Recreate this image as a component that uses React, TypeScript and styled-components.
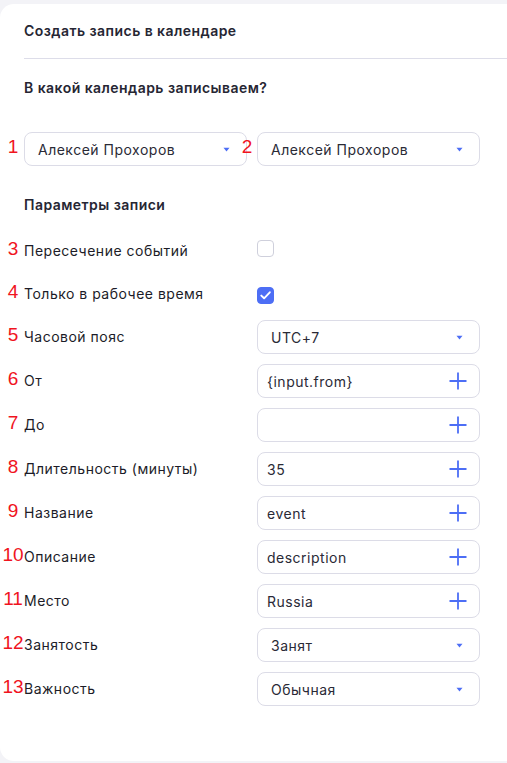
import React from "react";
import styled, { createGlobalStyle } from "styled-components";

const Global = createGlobalStyle`
  html, body { margin: 0; padding: 0; }
  body {
    background: #f3f3f7;
    font-family: Inter, "Noto Sans", sans-serif;
    color: #1f1f2b;
  }
  * { box-sizing: border-box; }
`;

const Card = styled.div`
  margin-top: 4px;
  height: 757px;
  background: #ffffff;
  border-radius: 14px 0 0 14px;
`;

const Header = styled.div`
  margin-left: 24px;
  padding: 19px 0 19px 0;
  border-bottom: 1px solid #dddde9;
`;

const Title = styled.div`
  font-size: 14px;
  line-height: 16px;
  font-weight: 600;
  letter-spacing: 0.45px;
  color: #262633;
`;

const Body = styled.div`
  padding: 21px 27px 0 24px;
`;

const SectionTitle = styled.div<{ $gap: number }>`
  font-size: 14px;
  line-height: 16px;
  font-weight: 600;
  letter-spacing: 0.45px;
  color: #262633;
  margin-bottom: ${(p) => p.$gap}px;
`;

const Pair = styled.div`
  display: grid;
  grid-template-columns: 1fr 1fr;
  gap: 10px;
  margin-bottom: 31px;
`;

const Slot = styled.div`
  position: relative;
`;

const Mark = styled.span<{ $left: number }>`
  position: absolute;
  left: ${(p) => p.$left}px;
  top: 50%;
  width: 26px;
  transform: translateY(-62%);
  text-align: center;
  font-family: "Liberation Sans", Arial, sans-serif;
  font-size: 19px;
  line-height: 20px;
  color: #f0141e;
  pointer-events: none;
`;

const Rows = styled.div`
  display: flex;
  flex-direction: column;
  gap: 10px;
  margin-top: 21px;
`;

const Row = styled.div<{ $h: number }>`
  position: relative;
  display: grid;
  grid-template-columns: 233px 1fr;
  align-items: center;
  height: ${(p) => p.$h}px;
`;

const Label = styled.div`
  font-size: 14px;
  line-height: 16px;
  letter-spacing: 0.5px;
  color: #1c1c28;
`;

const Field = styled.div<{ $pad: number }>`
  height: 34px;
  border: 1px solid #dcdce7;
  border-radius: 8px;
  background: #fff;
  display: flex;
  align-items: center;
  justify-content: space-between;
  padding: 0 12px 0 ${(p) => p.$pad}px;
  font-size: 14px;
  letter-spacing: 0.5px;
  color: #2a2a36;
`;

const Box = styled.span<{ $on?: boolean }>`
  display: inline-flex;
  align-items: center;
  justify-content: center;
  width: 17px;
  height: 17px;
  border-radius: 4px;
  border: 1px solid ${(p) => (p.$on ? "#4d6ef5" : "#cfd0dc")};
  background: ${(p) => (p.$on ? "#4d6ef5" : "#fff")};
`;

const Caret = () => (
  <svg width="7" height="5" viewBox="0 0 7 5" style={{ marginRight: 4 }}>
    <path d="M0.5 0.8h6L3.5 4.4z" fill="#4d6ef5" />
  </svg>
);

const PlusIcon = () => (
  <svg width="18" height="18" viewBox="0 0 18 18">
    <path d="M9 0.5v17M0.5 9h17" stroke="#4d6ef5" strokeWidth="1.8" fill="none" />
  </svg>
);

const Tick = () => (
  <svg width="11" height="9" viewBox="0 0 11 9">
    <path d="M1.3 4.6l2.8 2.7 5.7-6" stroke="#fff" strokeWidth="1.9" fill="none" strokeLinecap="round" strokeLinejoin="round" />
  </svg>
);

type Kind = "check" | "select" | "input";
interface Item {
  n: number;
  label: string;
  kind: Kind;
  value?: string;
  on?: boolean;
}

const items: Item[] = [
  { n: 3, label: "Пересечение событий", kind: "check", on: false },
  { n: 4, label: "Только в рабочее время", kind: "check", on: true },
  { n: 5, label: "Часовой пояс", kind: "select", value: "UTC+7" },
  { n: 6, label: "От", kind: "input", value: "{input.from}" },
  { n: 7, label: "До", kind: "input", value: "" },
  { n: 8, label: "Длительность (минуты)", kind: "input", value: "35" },
  { n: 9, label: "Название", kind: "input", value: "event" },
  { n: 10, label: "Описание", kind: "input", value: "description" },
  { n: 11, label: "Место", kind: "input", value: "Russia" },
  { n: 12, label: "Занятость", kind: "select", value: "Занят" },
  { n: 13, label: "Важность", kind: "select", value: "Обычная" },
];

function Control({ item }: { item: Item }) {
  if (item.kind === "check") {
    return (
      <div>
        <Box $on={item.on}>{item.on && <Tick />}</Box>
      </div>
    );
  }
  if (item.kind === "select") {
    return (
      <Field $pad={13}>
        <span>{item.value}</span>
        <Caret />
      </Field>
    );
  }
  return (
    <Field $pad={9}>
      <span>{item.value}</span>
      <PlusIcon />
    </Field>
  );
}

export default function App() {
  return (
    <>
      <Global />
      <Card>
        <Header>
          <Title>Создать запись в календаре</Title>
        </Header>
        <Body>
          <SectionTitle $gap={36}>В какой календарь записываем?</SectionTitle>
          <Pair>
            <Slot>
              <Field $pad={13}>
                <span>Алексей Прохоров</span>
                <Caret />
              </Field>
              <Mark $left={-24}>1</Mark>
            </Slot>
            <Slot>
              <Field $pad={13}>
                <span>Алексей Прохоров</span>
                <Caret />
              </Field>
              <Mark $left={-23}>2</Mark>
            </Slot>
          </Pair>
          <SectionTitle $gap={0}>Параметры записи</SectionTitle>
          <Rows>
            {items.map((it) => (
              <Row key={it.n} $h={it.kind === "check" ? 33 : 34}>
                <Mark $left={-24}>{it.n}</Mark>
                <Label>{it.label}</Label>
                <Control item={it} />
              </Row>
            ))}
          </Rows>
        </Body>
      </Card>
    </>
  );
}
